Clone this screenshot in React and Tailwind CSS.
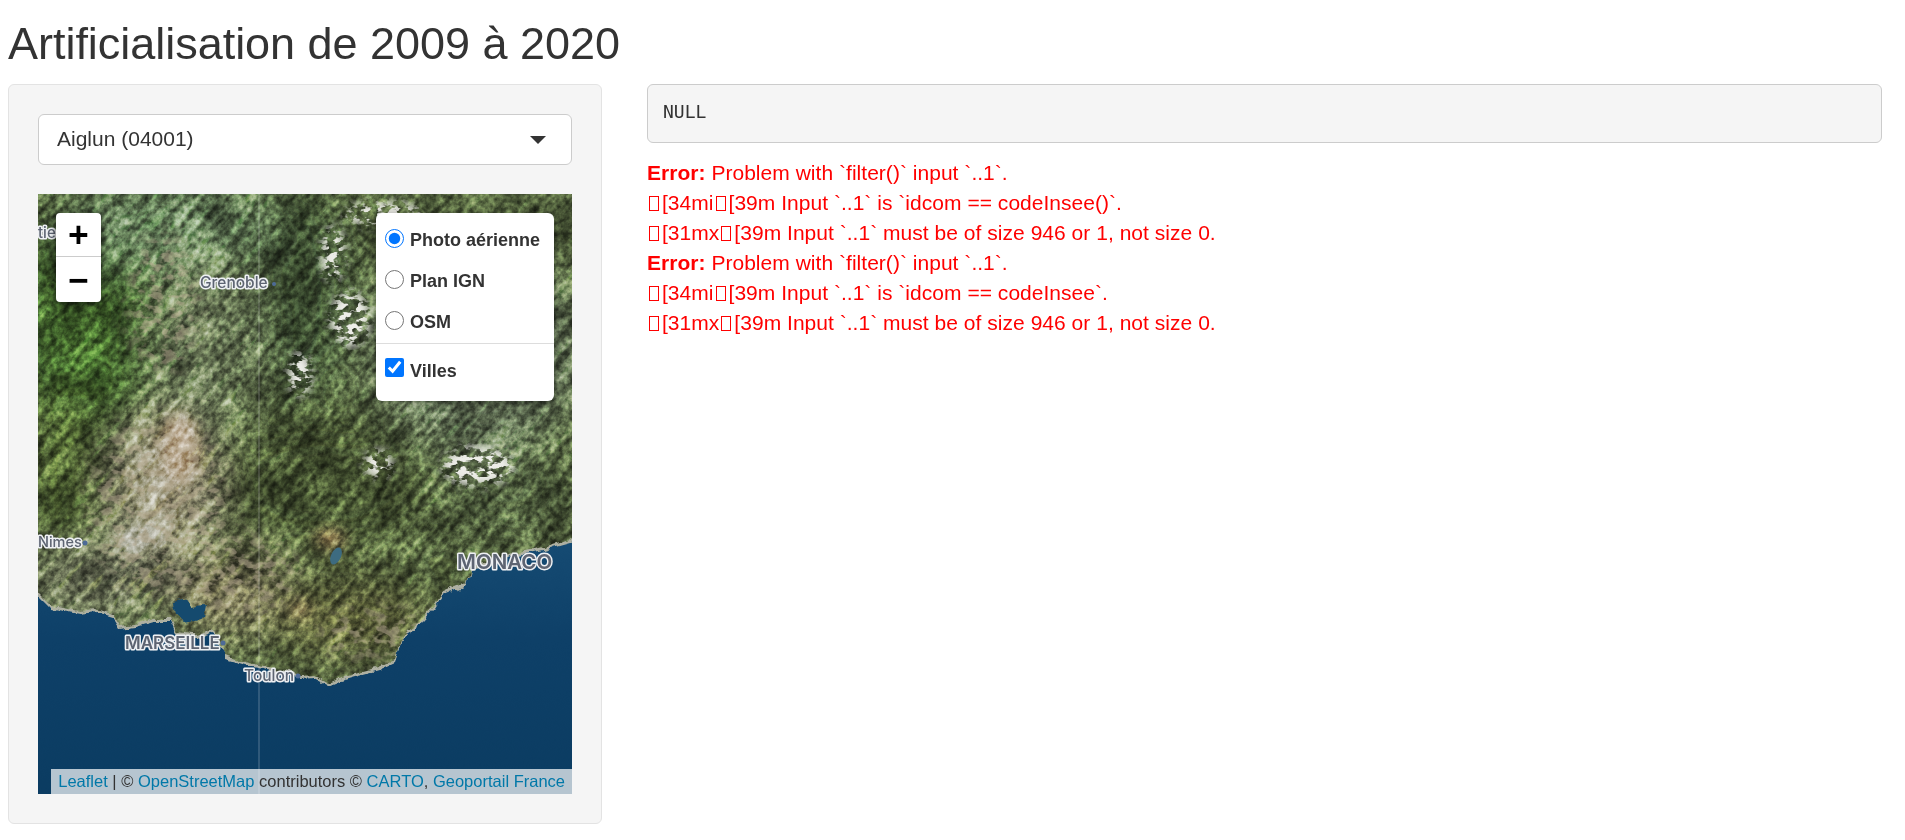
const SANS = { fontFamily: '"Liberation Sans", Arial, sans-serif' };

const COAST = 'M-30 396 L0 402 L13 415 L41 420 L60 418 L73 422 L81 435 L98 433 L116 428 L132 428 L138 442 L158 444 L175 438 L187 458 L187 465 L215 473 L240 478 L262 485 L276 484 L290 492 L304 486 L318 482 L340 476 L357 468 L363 450 L369 438 L385 428 L397 415 L405 402 L428 392 L432 375 L455 370 L476 362 L505 356 L534 348 L570 338 L570 640 L-30 640 Z';

function Tofu() {
  return <span className="inline-block w-[10px] h-[15px] border border-[#f00] ml-[2px] mr-[3px] align-[-1px]" />;
}

function ErrorLine({ bold, children }) {
  return (
    <div className="h-[30px] leading-[30px] whitespace-pre">
      {bold && <b>Error: </b>}
      {children}
    </div>
  );
}

function MapLabel({ x, y, size, weight = 600, children }) {
  return (
    <text x={x} y={y} fontSize={size} fontWeight={weight} fontFamily='Inter, "Open Sans", sans-serif'
      fill="#5d6472" stroke="#eef0f3" strokeWidth="3" paintOrder="stroke" strokeLinejoin="round">{children}</text>
  );
}

function Terrain() {
  return (
    <svg viewBox="0 0 534 600" className="absolute inset-0 w-full h-full block">
      <defs>
        <filter id="blur" x="-30%" y="-30%" width="160%" height="160%"><feGaussianBlur stdDeviation="22" /></filter>
        <filter id="soft" x="-30%" y="-30%" width="160%" height="160%"><feGaussianBlur stdDeviation="7" /></filter>
        <filter id="relief" x="0" y="0" width="100%" height="100%" colorInterpolationFilters="sRGB">
          <feTurbulence type="fractalNoise" baseFrequency="0.02 0.13" numOctaves="4" seed="11" />
          <feColorMatrix values="1.8 0 0 0 -0.4  1.8 0 0 0 -0.4  1.8 0 0 0 -0.4  0 0 0 0 1" />
        </filter>
        <filter id="blotch" x="0" y="0" width="100%" height="100%" colorInterpolationFilters="sRGB">
          <feTurbulence type="fractalNoise" baseFrequency="0.022" numOctaves="3" seed="31" />
          <feColorMatrix values="1.8 0 0 0 -0.4  1.8 0 0 0 -0.4  1.8 0 0 0 -0.4  0 0 0 0 1" />
        </filter>
        <filter id="fine" x="0" y="0" width="100%" height="100%" colorInterpolationFilters="sRGB">
          <feTurbulence type="fractalNoise" baseFrequency="0.16" numOctaves="3" seed="4" />
          <feColorMatrix values="2 0 0 0 -0.5  2 0 0 0 -0.5  2 0 0 0 -0.5  0 0 0 0 1" />
        </filter>
        <filter id="snow" x="-20%" y="-20%" width="140%" height="140%" colorInterpolationFilters="sRGB">
          <feGaussianBlur stdDeviation="5" result="area" />
          <feTurbulence type="fractalNoise" baseFrequency="0.1 0.16" numOctaves="3" seed="23" />
          <feColorMatrix values="0 0 0 0 0.93  0 0 0 0 0.93  0 0 0 0 0.91  9 0 0 0 -4.4" result="flecks" />
          <feComposite in="flecks" in2="area" operator="in" />
        </filter>
        <filter id="veins" x="-20%" y="-20%" width="140%" height="140%" colorInterpolationFilters="sRGB">
          <feGaussianBlur stdDeviation="10" result="area" />
          <feTurbulence type="fractalNoise" baseFrequency="0.08 0.12" numOctaves="3" seed="37" />
          <feColorMatrix values="0 0 0 0 0.72  0 0 0 0 0.67  0 0 0 0 0.57  7 0 0 0 -3.5" result="flecks" />
          <feComposite in="flecks" in2="area" operator="in" />
        </filter>
        <filter id="shore" x="-5%" y="-5%" width="110%" height="110%" colorInterpolationFilters="sRGB">
          <feTurbulence type="fractalNoise" baseFrequency="0.07" numOctaves="4" seed="9" />
          <feDisplacementMap in="SourceGraphic" scale="9" xChannelSelector="R" yChannelSelector="G" />
        </filter>
        <linearGradient id="sea" x1="0" y1="0" x2="0" y2="1">
          <stop offset="0" stopColor="#164c74" />
          <stop offset="0.35" stopColor="#0e4068" />
          <stop offset="1" stopColor="#0a3b60" />
        </linearGradient>
      </defs>

      <rect width="534" height="600" fill="#566640" />

      {/* colour regions of the land */}
      <g filter="url(#blur)">
        <ellipse cx="45" cy="130" rx="80" ry="110" fill="#3f622c" />
        <ellipse cx="130" cy="30" rx="110" ry="45" fill="#66805c" />
        <ellipse cx="165" cy="150" rx="55" ry="90" fill="#6c7a58" />
        <ellipse cx="265" cy="100" rx="50" ry="110" fill="#3c5032" />
        <ellipse cx="440" cy="160" rx="110" ry="100" fill="#5f6d52" />
        <ellipse cx="285" cy="290" rx="110" ry="70" fill="#465530" />
        <ellipse cx="470" cy="300" rx="70" ry="45" fill="#4c5a3a" />
        <ellipse cx="25" cy="280" rx="40" ry="80" fill="#4f6430" />
        <ellipse cx="125" cy="290" rx="50" ry="70" fill="#989379" />
        <ellipse cx="70" cy="385" rx="80" ry="30" fill="#868a70" />
        <ellipse cx="190" cy="400" rx="60" ry="40" fill="#787554" />
        <ellipse cx="310" cy="425" rx="80" ry="38" fill="#5c5f38" />
      </g>

      <g filter="url(#soft)">
        <ellipse cx="142" cy="255" rx="20" ry="36" fill="#b9a88f" />
        <ellipse cx="100" cy="345" rx="24" ry="12" fill="#a3a290" />
        <ellipse cx="292" cy="345" rx="16" ry="10" fill="#ad9a68" />
        <ellipse cx="262" cy="415" rx="11" ry="7" fill="#ad9a68" />
      </g>

      {/* relief and grain: ridges run north-east */}
      <rect x="-300" y="-300" width="1200" height="1200" filter="url(#relief)" opacity="0.4" className="mix-blend-overlay" transform="rotate(-50 267 300)" />
      <rect width="534" height="600" filter="url(#blotch)" opacity="0.35" className="mix-blend-overlay" />
      <rect width="534" height="600" filter="url(#fine)" opacity="0.4" className="mix-blend-overlay" />

      <g filter="url(#veins)" opacity="0.55">
        <ellipse cx="120" cy="310" rx="70" ry="90" fill="#fff" />
        <ellipse cx="200" cy="380" rx="60" ry="40" fill="#fff" />
        <ellipse cx="340" cy="440" rx="60" ry="25" fill="#fff" />
        <ellipse cx="125" cy="110" rx="35" ry="70" fill="#fff" />
      </g>

      <g filter="url(#snow)">
        <ellipse cx="295" cy="60" rx="12" ry="28" fill="#fff" />
        <ellipse cx="312" cy="125" rx="20" ry="28" fill="#fff" />
        <ellipse cx="262" cy="180" rx="12" ry="22" fill="#fff" />
        <ellipse cx="345" cy="20" rx="40" ry="12" fill="#fff" />
        <ellipse cx="440" cy="272" rx="36" ry="20" fill="#fff" />
        <ellipse cx="340" cy="270" rx="14" ry="14" fill="#fff" />
      </g>

      {/* sea, pale shoreline under it */}
      <g filter="url(#shore)">
        <path d={COAST} fill="#aeb0a2" transform="translate(0 -3)" />
        <path d={COAST} fill="url(#sea)" />
        <path d="M136 408 L150 405 L152 414 L168 412 L165 424 L148 428 L138 420 Z" fill="#154a6e" />
      </g>
      <ellipse cx="298" cy="362" rx="5" ry="9" fill="#3d6b80" transform="rotate(25 298 362)" />

      {/* tile seam */}
      <rect x="220.5" width="1" height="600" fill="#fff" opacity="0.3" />

      <MapLabel x="162" y="94" size="15.5" weight={500}>Grenoble</MapLabel>
      <MapLabel x="0" y="44" size="15" weight={500}>tie</MapLabel>
      <MapLabel x="0" y="353" size="14.5" weight={500}>Nimes</MapLabel>
      <MapLabel x="87" y="455" size="17">MARSEILLE</MapLabel>
      <MapLabel x="206" y="487" size="15.5" weight={500}>Toulon</MapLabel>
      <MapLabel x="419" y="375" size="20.5">MONACO</MapLabel>
      <circle cx="236" cy="90" r="2" fill="#4d6a96" />
      <circle cx="47" cy="349" r="2.5" fill="#4d6a96" />
      <circle cx="185" cy="449" r="2.5" fill="#4d6a96" />
      <circle cx="260" cy="482" r="2.5" fill="#4d6a96" />
    </svg>
  );
}

function Layer({ type = 'radio', checked, textClass, children }) {
  return (
    <label className="flex items-center h-[41px]">
      <input type={type} name="layer" defaultChecked={checked}
        className="w-[19px] h-[19px] m-0 ml-[9px] mr-[6px] accent-[#0075ff] relative top-[-1px]" />
      <span className={`font-bold text-[18px] text-[#333] relative ${textClass || 'top-[1px]'}`}>{children}</span>
    </label>
  );
}

export default function App() {
  return (
    <div className="bg-white min-h-[840px] text-[#333] pl-[8px] pr-[23px]" style={SANS}>
      <h2 className="text-[45px] leading-[50px] font-normal h-[84px] pt-[19px] tracking-[-0.03px]">Artificialisation de 2009 à 2020</h2>

      <div className="flex items-start gap-[45px]">
        {/* sidebar */}
        <div className="w-[594px] shrink-0 bg-[#f5f5f5] border border-[#e3e3e3] rounded-[6px] p-[29px]">
          <div className="h-[51px] bg-white border border-[#cccccc] rounded-[6px] flex items-center justify-between pl-[18px] pr-[25px] text-[21px]">
            <span className="relative top-[-1px]">Aiglun (04001)</span>
            <span className="w-0 h-0 border-x-[8px] border-x-transparent border-t-[8px] border-t-[#333]" />
          </div>

          <div className="relative mt-[29px] h-[600px] overflow-hidden">
            <Terrain />

            {/* zoom buttons */}
            <div className="absolute left-[18px] top-[19px] w-[45px] bg-white rounded-[4px] shadow-[0_1px_7px_rgba(0,0,0,0.65)] text-black">
              <div className="h-[44px] flex items-center justify-center border-b border-[#ccc] text-[33px] font-bold" style={{ fontFamily: '"DejaVu Sans Mono", monospace' }}>+</div>
              <div className="h-[45px] flex items-center justify-center text-[33px] font-bold" style={{ fontFamily: '"DejaVu Sans Mono", monospace' }}>−</div>
            </div>

            {/* layer control */}
            <div className="absolute left-[338px] top-[19px] w-[178px] h-[188px] bg-white rounded-[6px] shadow-[0_1px_7px_rgba(0,0,0,0.4)] pt-[6px]">
              <Layer checked>Photo aérienne</Layer>
              <Layer>Plan IGN</Layer>
              <Layer>OSM</Layer>
              <div className="border-t border-[#ddd] mt-[1px] pt-[4px]">
                <Layer type="checkbox" checked textClass="top-[3px]">Villes</Layer>
              </div>
            </div>

            {/* attribution */}
            <div className="absolute right-0 bottom-0 h-[25px] leading-[25px] bg-white/70 pl-[7px] pr-[7px] text-[16.5px] text-[#333] whitespace-nowrap">
              <a className="text-[#0078a8]">Leaflet</a> | © <a className="text-[#0078a8]">OpenStreetMap</a> contributors © <a className="text-[#0078a8]">CARTO</a>, <a className="text-[#0078a8]">Geoportail France</a>
            </div>
          </div>
        </div>

        {/* output */}
        <div className="flex-1 min-w-0">
          <pre className="h-[59px] bg-[#f5f5f5] border border-[#cccccc] rounded-[6px] px-[15px] pt-[13px] text-[18px] leading-[27px] text-[#333]" style={{ fontFamily: '"DejaVu Sans Mono", monospace' }}>NULL</pre>
          <div className="mt-[15px] text-[21px] text-[#ff0000] tracking-[0.03px]">
            <ErrorLine bold>{'Problem with `filter()` input `..1`.'}</ErrorLine>
            <ErrorLine><Tofu />{'[34mi'}<Tofu />{'[39m Input `..1` is `idcom == codeInsee()`.'}</ErrorLine>
            <ErrorLine><Tofu />{'[31mx'}<Tofu />{'[39m Input `..1` must be of size 946 or 1, not size 0.'}</ErrorLine>
            <ErrorLine bold>{'Problem with `filter()` input `..1`.'}</ErrorLine>
            <ErrorLine><Tofu />{'[34mi'}<Tofu />{'[39m Input `..1` is `idcom == codeInsee`.'}</ErrorLine>
            <ErrorLine><Tofu />{'[31mx'}<Tofu />{'[39m Input `..1` must be of size 946 or 1, not size 0.'}</ErrorLine>
          </div>
        </div>
      </div>
    </div>
  );
}
